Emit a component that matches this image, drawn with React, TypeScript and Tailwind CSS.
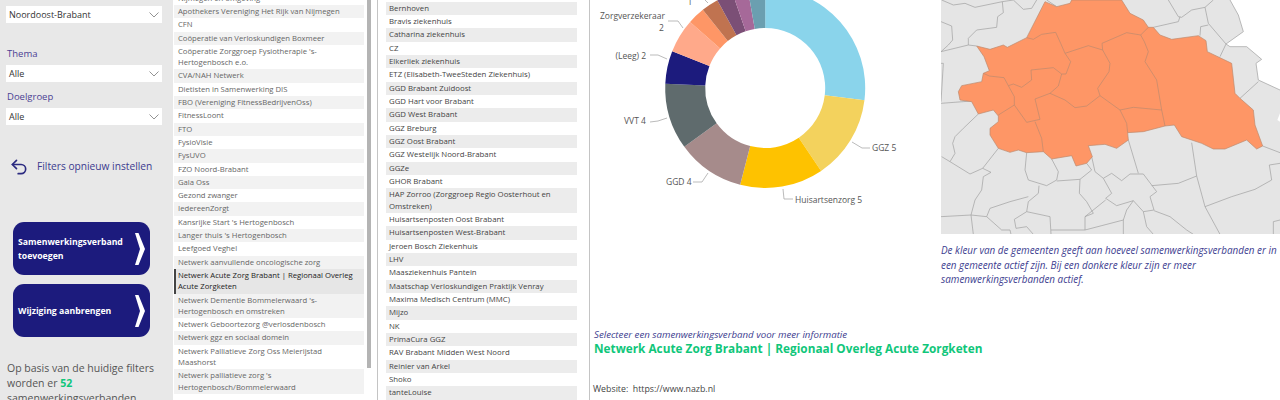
import { Undo2 } from 'lucide-react'

const listOne = [
  { label: 'Nijmegen en omgeving' },
  { label: 'Apothekers Vereniging Het Rijk van Nijmegen' },
  { label: 'CFN' },
  { label: 'Coöperatie van Verloskundigen Boxmeer' },
  { label: "Coöperatie Zorggroep Fysiotherapie 's-Hertogenbosch e.o." },
  { label: 'CVA/NAH Netwerk' },
  { label: 'Dietisten in Samenwerking DIS' },
  { label: 'FBO (Vereniging FitnessBedrijvenOss)' },
  { label: 'FitnessLoont' },
  { label: 'FTO' },
  { label: 'FysioVisie' },
  { label: 'FysUVO' },
  { label: 'FZO Noord-Brabant' },
  { label: 'Gala Oss' },
  { label: 'Gezond zwanger' },
  { label: 'IedereenZorgt' },
  { label: "Kansrijke Start 's Hertogenbosch" },
  { label: "Langer thuis 's Hertogenbosch" },
  { label: 'Leefgoed Veghel' },
  { label: 'Netwerk aanvullende oncologische zorg' },
  { label: 'Netwerk Acute Zorg Brabant | Regionaal Overleg Acute Zorgketen', selected: true },
  { label: "Netwerk Dementie Bommelerwaard 's-Hertogenbosch en omstreken" },
  { label: 'Netwerk Geboortezorg @verlosdenbosch' },
  { label: 'Netwerk ggz en sociaal domein' },
  { label: 'Netwerk Palliatieve Zorg Oss Meierijstad Maashorst' },
  { label: "Netwerk palliatieve zorg 's Hertogenbosch/Bommelerwaard" },
]

const listTwo = [
  'Bernhoven',
  'Bravis ziekenhuis',
  'Catharina ziekenhuis',
  'CZ',
  'Elkerliek ziekenhuis',
  'ETZ (Elisabeth-TweeSteden Ziekenhuis)',
  'GGD Brabant Zuidoost',
  'GGD Hart voor Brabant',
  'GGD West Brabant',
  'GGZ Breburg',
  'GGZ Oost Brabant',
  'GGZ Westelijk Noord-Brabant',
  'GGZe',
  'GHOR Brabant',
  'HAP Zorroo (Zorggroep Regio Oosterhout en Omstreken)',
  'Huisartsenposten Oost Brabant',
  'Huisartsenposten West-Brabant',
  'Jeroen Bosch Ziekenhuis',
  'LHV',
  'Maasziekenhuis Pantein',
  'Maatschap Verloskundigen Praktijk Venray',
  'Maxima Medisch Centrum (MMC)',
  'Mijzo',
  'NK',
  'PrimaCura GGZ',
  'RAV Brabant Midden West Noord',
  'Reinier van Arkel',
  'Shoko',
  'tanteLouise',
]

const slices = [
  { from: 0, to: 97, color: '#8ad4eb' },
  { from: 97, to: 146, color: '#f3d25d' },
  { from: 146, to: 194.5, color: '#fec200' },
  { from: 194.5, to: 234, color: '#a68b8b' },
  { from: 234, to: 272.5, color: '#5f6b6d' },
  { from: 272.5, to: 291.6, color: '#1c1b7d' },
  { from: 291.6, to: 311.3, color: '#ffa98a' },
  { from: 311.3, to: 321.4, color: '#fe9666' },
  { from: 321.4, to: 331.4, color: '#c07350' },
  { from: 331.4, to: 341, color: '#7b4f76' },
  { from: 341, to: 350, color: '#a66999' },
  { from: 350, to: 360, color: '#6b9fb0' },
]

const orangeOutline =
  '290,113 345,5 380,20 420,10 425,0 575,0 600,40 640,60 655,82 670,82 690,105 725,118 805,107 828,122 832,155 905,190 915,280 930,295 970,330 975,375 998,438 980,447 950,420 885,447 850,447 815,430 755,410 733,375 705,378 640,395 593,398 595,420 560,445 525,433 475,437 487,470 470,490 438,498 425,467 365,477 340,455 290,458 265,450 240,457 205,445 180,405 180,385 205,365 205,348 190,330 145,342 125,305 90,300 85,275 95,257 155,245 160,220 178,212 162,170 140,138 180,148 220,135 232,142'

const orangeLines = [
  '290,113 310,118 335,103 377,97 392,130 405,160 475,137 518,150 516,130 590,98 632,105 655,82',
  '405,160 422,185 408,222 395,222 370,203 303,210 305,240 275,262 250,252 235,257 222,233 178,228 160,220',
  '632,105 643,125 655,155 645,185 680,240 695,330 705,378',
  '518,150 540,190 537,215 503,265 510,287 570,330 610,322 695,330',
  '510,287 470,318 435,323 405,300 360,280 385,258 395,222',
  '360,280 315,297 330,358 290,367 253,315 253,290 235,257',
  '253,315 205,345',
  '570,330 590,370 593,398',
  '315,365 335,415 340,455',
]

const grayLines = [
  '33,65 65,78 68,120 55,135 33,155',
  '33,155 115,135 140,138',
  '115,135 115,115 140,90 200,82 203,50 220,38 217,5 135,22 105,10 70,15 35,0',
  '217,5 250,0 280,28 305,25 320,0',
  '350,0 380,20',
  '465,0 480,10 490,0',
  '715,0 745,50 755,52 785,30 825,22 835,70 888,132',
  '825,22 850,0',
  '670,82 745,65 750,50',
  '810,107 812,80 835,75',
  '888,132 870,170',
  '33,190 40,190 33,305',
  '33,310 125,303',
  '930,295 985,245',
  '145,342 100,385 75,410 68,430 75,460 60,485 35,470',
  '60,485 120,522 158,505 183,517 160,530 155,570 135,600 123,645 33,650',
  '205,445 158,505',
  '290,458 285,510 295,540 350,557 380,540 385,515 365,477',
  '380,543 450,538 485,510 470,490',
  '450,538 448,580 470,605 490,640',
  '485,470 495,515 520,535 545,520 575,542 600,522 640,522 680,575 660,590 672,630 640,635 610,602 560,617 527,595 545,580 520,535',
  '595,420 625,520',
  '665,557 745,550 800,528 785,428',
  '800,528 825,620 905,590 975,568 1025,540 1018,495 1050,490',
  '998,438 1050,458',
  '825,620 870,703',
  '672,632 720,650 770,690 790,703',
  '640,635 650,680 670,703',
  '610,602 590,630 580,660 580,703',
  '580,660 465,690 465,650 527,600',
  '490,640 465,650',
  '327,557 325,580 295,605 290,635 253,658 258,685 290,680 310,703',
  '290,635 360,650 363,703',
  '295,590 240,605 180,625 170,650 215,690 240,690 243,703',
  '123,645 130,703',
  '123,645 170,650',
  '363,690 465,690',
  '1030,703 1030,665 1050,660',
]

function arc(from: number, to: number) {
  const cx = 175.2
  const cy = 88
  const point = (r: number, deg: number) => {
    const rad = (deg * Math.PI) / 180
    return `${cx + r * Math.sin(rad)} ${cy - r * Math.cos(rad)}`
  }
  const large = to - from > 180 ? 1 : 0
  return `M${point(100, from)} A100 100 0 ${large} 1 ${point(100, to)} L${point(60, to)} A60 60 0 ${large} 0 ${point(60, from)} Z`
}

function Dropdown({ value }: { value: string }) {
  return (
    <div className="flex h-[17px] w-[156px] items-center justify-between bg-white pl-[3px] pr-[3px] text-[9px] text-[#333]">
      <span>{value}</span>
      <svg width="10" height="6" viewBox="0 0 10 6" fill="none" stroke="#777" strokeWidth="0.8">
        <path d="M0.5 0.5 5 5 9.5 0.5" />
      </svg>
    </div>
  )
}

function ActionButton({ children }: { children: React.ReactNode }) {
  return (
    <div className="flex h-[53px] w-[137px] items-center justify-between rounded-[11px] bg-[#1c1b7d] pl-[5px] pr-[5px] text-[8.7px] font-bold leading-[14px] text-white">
      <span className="w-[112px]">{children}</span>
      <svg width="10" height="32" viewBox="0 0 10 32" fill="white">
        <path d="M0 0H3.5L10 16 3.5 32H0L5 16Z" />
      </svg>
    </div>
  )
}

export default function App() {
  return (
    <div className="flex h-[400px] w-[1280px] overflow-hidden bg-white font-['Open_Sans',sans-serif]">
      {/* Filters */}
      <div className="w-[173px] shrink-0 bg-[#e8e8e8] pl-[6px] pt-[6px]">
        <Dropdown value="Noordoost-Brabant" />
        <div className="mt-[23px] h-[19px] pl-[1px] text-[9.5px] leading-[16px] text-[#4b3f94]">Thema</div>
        <Dropdown value="Alle" />
        <div className="mt-[7px] h-[19px] pl-[1px] text-[9.5px] leading-[16px] text-[#4b3f94]">Doelgroep</div>
        <Dropdown value="Alle" />
        <div className="ml-[3px] mt-[32px] flex items-center gap-[8px] text-[10.2px] text-[#3b3a8f]">
          <Undo2 size={20} strokeWidth={2} className="text-[#2b2a80]" />
          <span>Filters opnieuw instellen</span>
        </div>
        <div className="ml-[7px] mt-[45px] flex flex-col gap-[9px]">
          <ActionButton>Samenwerkingsverband toevoegen</ActionButton>
          <ActionButton>Wijziging aanbrengen</ActionButton>
        </div>
        <p className="ml-[1px] mt-[24px] w-[150px] text-[10.5px] leading-[15px] text-[#555]">
          Op basis van de huidige filters worden er <span className="font-bold text-[#10c67a]">52</span> samenwerkingsverbanden
        </p>
      </div>

      {/* Samenwerkingsverbanden */}
      <div className="relative w-[204px] shrink-0 pl-[1px]">
        <div className="-mt-[8.3px] w-[190px]">
          {listOne.map((row, i) => (
            <div
              key={row.label}
              className={`px-[4px] py-[1px] text-[7.7px] leading-[11.3px] ${
                row.selected
                  ? 'border-l-2 border-[#444] bg-[#e6e6e6] pl-[2px] text-[#222]'
                  : i % 2 === 1
                    ? 'bg-[#f2f2f2] text-[#666]'
                    : 'bg-white text-[#666]'
              }`}
            >
              {row.label}
            </div>
          ))}
        </div>
        <div className="absolute right-[6px] top-0 h-[368px] w-[4px] bg-[#b4b4b4]" />
      </div>

      {/* Partners */}
      <div className="w-[213px] shrink-0 border-x border-[#c4c4c4] pl-[8px] pt-[1.5px]">
        <div className="w-[191px]">
          {listTwo.map((label, i) => (
            <div
              key={label}
              className={`px-[3px] py-[1px] text-[7.8px] leading-[11.35px] text-[#444] ${i % 2 === 0 ? 'bg-[#ececec]' : 'bg-white'}`}
            >
              {label}
            </div>
          ))}
        </div>
      </div>

      {/* Details */}
      <div className="flex min-w-0 flex-1 flex-col">
        <div className="flex h-[328px]">
          <svg width="351" height="234" viewBox="0 0 351 234" className="shrink-0">
            {slices.map((s) => (
              <path key={s.from} d={arc(s.from, s.to)} fill={s.color} />
            ))}
            <g fill="none" stroke="#aaa" strokeWidth="0.8">
              <path d="M78 21 L88 21 L93 28" />
              <path d="M60 55 L68 55 L77 59" />
              <path d="M60 122 L68 121 L77 118" />
              <path d="M103 182 L112 182 L118 173" />
              <path d="M193 189 L194 199 L203 199" />
              <path d="M262 142 L272 148 L280 148" />
              <path d="M115 0 L118 3" />
            </g>
            <g fill="#555" fontSize="8.5">
              <text x="10" y="19">Zorgverzekeraar</text>
              <text x="69" y="31">2</text>
              <text x="97.5" y="5">1</text>
              <text x="25.5" y="59">(Leeg) 2</text>
              <text x="34" y="124">VVT 4</text>
              <text x="76" y="185">GGD 4</text>
              <text x="205" y="203">Huisartsenzorg 5</text>
              <text x="282" y="151">GGZ 5</text>
            </g>
          </svg>
          <div className="flex w-[339px] shrink-0 flex-col">
            <svg width="339" height="234" viewBox="33 0 1017 702" className="shrink-0 bg-[#e5e5e5]">
              <polygon points="900,0 925,45 940,95 888,132 900,140 950,140 995,178 978,190 985,240 1050,270 1050,0" fill="white" />
              <polygon points="1050,340 1042,360 1050,365" fill="white" />
              <g fill="none" stroke="#a3a3a3" strokeWidth="2.2">
                {grayLines.map((line) => (
                  <polyline key={line} points={line} />
                ))}
                <polyline points="900,0 925,45 940,95 888,132 900,140 950,140 995,178 978,190 985,240 1050,270" />
              </g>
              <polygon points={orangeOutline} fill="#fe9666" stroke="#b98a6e" strokeWidth="2" />
              <g fill="none" stroke="#b98a6e" strokeWidth="2">
                {orangeLines.map((line) => (
                  <polyline key={line} points={line} />
                ))}
              </g>
            </svg>
            <p className="mt-[9px] text-[9.9px] italic leading-[14.5px] text-[#3d3d8f]">
              De kleur van de gemeenten geeft aan hoeveel samenwerkingsverbanden er in een gemeente actief zijn. Bij een donkere kleur zijn er meer samenwerkingsverbanden actief.
            </p>
          </div>
        </div>
        <div className="pl-[4px] text-[9.7px] italic leading-[13px] text-[#3d3d8f]">
          Selecteer een samenwerkingsverband voor meer informatie
        </div>
        <div className="pl-[4px] text-[11.8px] font-bold leading-[15px] text-[#10c67a]">
          Netwerk Acute Zorg Brabant | Regionaal Overleg Acute Zorgketen
        </div>
        <div className="mt-[27px] pl-[3px] text-[8.8px] text-[#444]">Website:&nbsp; https://www.nazb.nl</div>
      </div>
    </div>
  )
}
